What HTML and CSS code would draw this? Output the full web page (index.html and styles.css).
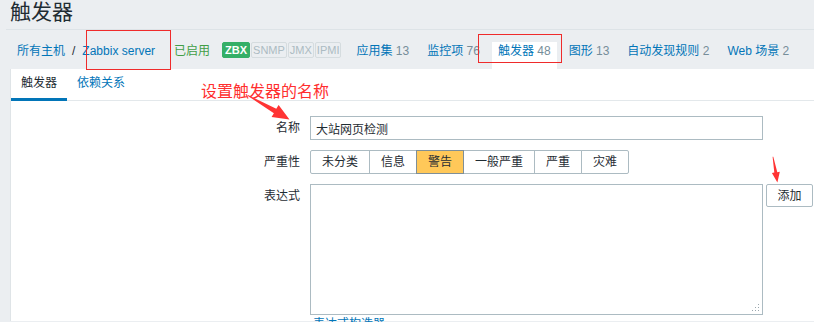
FILE: index.html
```html
<!DOCTYPE html>
<html lang="zh-CN">
<head>
<meta charset="utf-8">
<title>触发器</title>
<link rel="stylesheet" href="styles.css">
</head>
<body>
<div class="page">
  <header class="page-header">
    <h1>触发器</h1>
  </header>

  <nav class="host-nav">
    <ul class="breadcrumbs">
      <li><a href="#">所有主机</a></li>
      <li class="sep">/</li>
      <li><a href="#">Zabbix server</a></li>
    </ul>
    <span class="status-on">已启用</span>
    <span class="badges">
      <span class="badge badge-on">ZBX</span>
      <span class="badge">SNMP</span>
      <span class="badge">JMX</span>
      <span class="badge">IPMI</span>
    </span>
    <ul class="nav-items">
      <li class="nav-item"><a href="#">应用集</a> <span class="count">13</span></li>
      <li class="nav-item"><a href="#">监控项</a> <span class="count">76</span></li>
      <li class="nav-item selected"><a href="#">触发器</a> <span class="count">48</span></li>
      <li class="nav-item"><a href="#">图形</a> <span class="count">13</span></li>
      <li class="nav-item"><a href="#">自动发现规则</a> <span class="count">2</span></li>
      <li class="nav-item"><a href="#">Web 场景</a> <span class="count">2</span></li>
    </ul>
  </nav>

  <main class="panel">
    <ul class="tabs">
      <li class="tab active">触发器</li>
      <li class="tab"><a href="#">依赖关系</a></li>
    </ul>

    <form class="form-grid">
      <label class="form-label">名称</label>
      <div class="form-field">
        <input class="text-input" type="text" value="大站网页检测">
      </div>

      <label class="form-label">严重性</label>
      <div class="form-field">
        <ul class="radio-segmented">
          <li>未分类</li>
          <li>信息</li>
          <li class="checked">警告</li>
          <li>一般严重</li>
          <li>严重</li>
          <li>灾难</li>
        </ul>
      </div>

      <label class="form-label">表达式</label>
      <div class="form-field">
        <div class="expr-row">
          <div class="textarea-wrap">
            <textarea class="textarea"></textarea>
            <svg class="grip" width="8" height="8" viewBox="0 0 8 8">
              <rect x="6" y="0" width="1" height="1" fill="#9aa7ae"/>
              <rect x="3" y="3" width="1" height="1" fill="#9aa7ae"/>
              <rect x="6" y="3" width="1" height="1" fill="#9aa7ae"/>
              <rect x="0" y="6" width="1" height="1" fill="#9aa7ae"/>
              <rect x="3" y="6" width="1" height="1" fill="#9aa7ae"/>
              <rect x="6" y="6" width="1" height="1" fill="#9aa7ae"/>
            </svg>
          </div>
          <button class="btn" type="button">添加</button>
        </div>
        <a class="constructor-link" href="#">表达式构造器</a>
      </div>
    </form>
  </main>

  <div class="annot-box box-host"></div>
  <div class="annot-box box-triggers"></div>
  <span class="annot-text">设置触发器的名称</span>
  <svg class="annot-arrows" width="814" height="322" viewBox="0 0 814 322">
    <polygon fill="#ff3434" points="248,95 276.3,108.8 278.6,104.9 289.5,119.5 271.6,117.1 273.9,113.2 247.6,95.8"/>
    <polygon fill="#ff3434" points="773.3,156.7 777.3,172.2 779.8,171.8 777.4,182.5 771.9,173 774.3,172.6 772.6,156.8"/>
  </svg>
</div>
</body>
</html>
```

FILE: styles.css
```css
html, body {
  margin: 0;
  padding: 0;
  overflow: hidden;
}

body {
  background: #ebeef1;
  color: #1f2c33;
  font-family: "Liberation Sans", Arial, "Noto Sans CJK SC", sans-serif;
  font-size: 12px;
  line-height: 14px;
}

a {
  color: #0275b8;
  text-decoration: none;
}

ul {
  margin: 0;
  padding: 0;
  list-style: none;
}

.page {
  position: relative;
  width: 814px;
  height: 322px;
  overflow: hidden;
}

/* header */
.page-header {
  margin-left: 6px;
  padding-left: 4px;
  height: 30px;
  box-sizing: border-box;
  border-bottom: 1px solid #dde3e7;
}

.page-header h1 {
  margin: 0;
  padding-top: 1px;
  font-size: 21px;
  line-height: 21px;
  font-weight: normal;
  color: #1f2c33;
}

/* host navigation */
.host-nav {
  display: flex;
  align-items: flex-start;
  height: 39px;
  box-sizing: border-box;
  padding: 12px 0 0 17px;
}

.breadcrumbs {
  display: flex;
  padding-top: 2px;
}

.breadcrumbs .sep {
  margin: 0 7px;
  color: #1f2c33;
}

.status-on {
  margin-left: 19px;
  padding-top: 2px;
  color: #429e47;
}

.badges {
  display: flex;
  gap: 1px;
  margin-left: 12px;
}

.badge {
  height: 16px;
  box-sizing: border-box;
  padding: 0 1px;
  border: 1px solid #d5dcdf;
  border-radius: 2px;
  font-size: 11px;
  line-height: 14px;
  color: #acbbc2;
}

.badge-on {
  background: #34af67;
  border-color: #34af67;
  color: #ffffff;
  font-weight: bold;
  padding: 0 2px;
}

.nav-items {
  display: flex;
  gap: 6px;
  margin-left: 9px;
}

.nav-item {
  height: 27px;
  box-sizing: border-box;
  padding: 2px 6px 0;
  white-space: nowrap;
}

.nav-item.selected {
  background: #ffffff;
}

.count {
  color: #768d99;
}

/* panel */
.panel {
  margin-left: 10px;
  height: 252px;
  background: #ffffff;
  border-left: 1px solid #dfe4e7;
}

.tabs {
  display: flex;
  height: 32px;
  box-sizing: border-box;
  border-bottom: 1px solid #e3e8eb;
}

.tab {
  height: 32px;
  box-sizing: border-box;
  padding: 0 10px;
  line-height: 29px;
  margin-bottom: -1px;
}

.tab.active {
  border-bottom: 3px solid #0275b8;
  color: #1f2c33;
}

/* form */
.form-grid {
  display: grid;
  grid-template-columns: 289px 1fr;
  column-gap: 10px;
  row-gap: 10px;
  padding-top: 15px;
  margin: 0;
}

.form-label {
  text-align: right;
  line-height: 24px;
  color: #1f2c33;
}

.form-field {
  display: flex;
  flex-direction: column;
  align-items: flex-start;
}

.text-input {
  width: 453px;
  height: 24px;
  box-sizing: border-box;
  margin: 0;
  padding: 0 5px;
  border: 1px solid #acbbc2;
  border-radius: 0;
  font: inherit;
  color: #1f2c33;
  outline: none;
}

.radio-segmented {
  display: flex;
}

.radio-segmented li {
  height: 24px;
  box-sizing: border-box;
  padding: 0 11px;
  border: 1px solid #acbbc2;
  margin-left: -1px;
  line-height: 22px;
  color: #1f2c33;
  background: #ffffff;
}

.radio-segmented li:first-child {
  margin-left: 0;
  border-radius: 2px 0 0 2px;
}

.radio-segmented li:last-child {
  border-radius: 0 2px 2px 0;
}

.radio-segmented li.checked {
  background: #ffc859;
  border-color: #7f8f98;
  position: relative;
}

.expr-row {
  display: flex;
  align-items: flex-start;
  gap: 3px;
}

.textarea-wrap {
  position: relative;
}

.textarea {
  display: block;
  width: 453px;
  height: 131px;
  box-sizing: border-box;
  margin: 0;
  padding: 4px 5px;
  border: 1px solid #acbbc2;
  border-radius: 0;
  resize: none;
  font: inherit;
  outline: none;
}

.grip {
  position: absolute;
  right: 3px;
  bottom: 3px;
}

.btn {
  width: 47px;
  height: 23px;
  box-sizing: border-box;
  margin: 0;
  padding: 0;
  border: 1px solid #acbbc2;
  border-radius: 2px;
  background: #ffffff;
  font: inherit;
  color: #1f2c33;
}

.constructor-link {
  margin: 2px 0 0 3px;
}

/* annotations */
.annot-box {
  position: absolute;
  border: 1px solid #ef2b2b;
  box-sizing: border-box;
}

.box-host {
  left: 86px;
  top: 30px;
  width: 85px;
  height: 40px;
}

.box-triggers {
  left: 478px;
  top: 34px;
  width: 84px;
  height: 29px;
}

.annot-text {
  position: absolute;
  left: 201px;
  top: 83px;
  font-size: 16px;
  line-height: 18px;
  color: #ff2f2f;
}

.annot-arrows {
  position: absolute;
  left: 0;
  top: 0;
  pointer-events: none;
}
```
